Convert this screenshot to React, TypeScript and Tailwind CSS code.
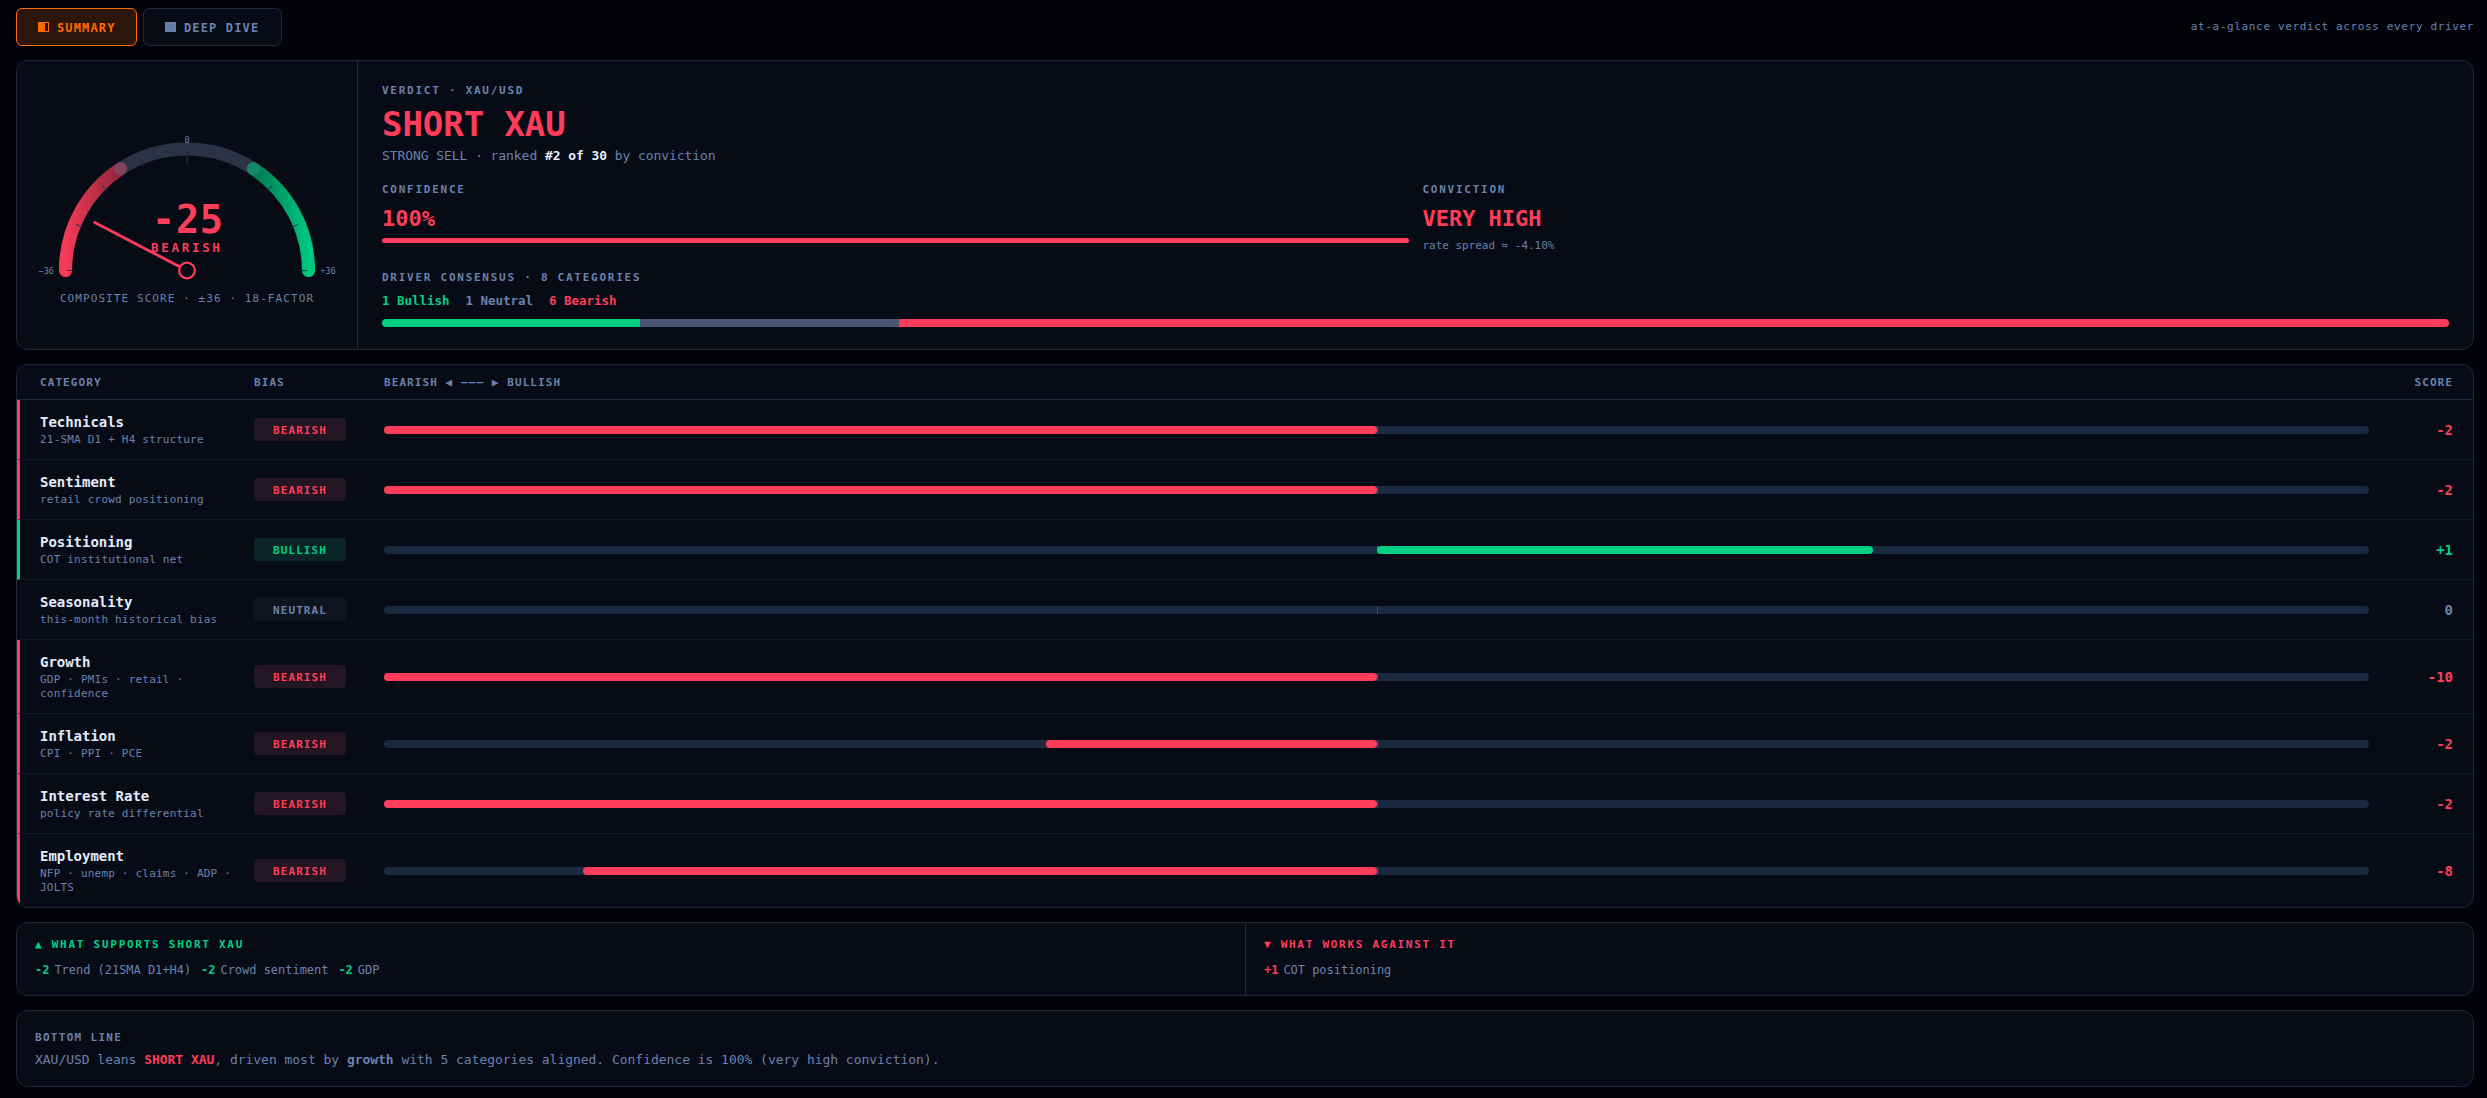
import { clsx } from 'clsx';

type Bias = 'BEARISH' | 'BULLISH' | 'NEUTRAL';

interface Driver {
  name: string;
  detail: string;
  bias: Bias;
  score: string;
  // share of the half track that is filled, 0 to 100
  fill: number;
}

interface Factor {
  value: string;
  label: string;
}

const DRIVERS: Driver[] = [
  { name: 'Technicals', detail: '21-SMA D1 + H4 structure', bias: 'BEARISH', score: '-2', fill: 100 },
  { name: 'Sentiment', detail: 'retail crowd positioning', bias: 'BEARISH', score: '-2', fill: 100 },
  { name: 'Positioning', detail: 'COT institutional net', bias: 'BULLISH', score: '+1', fill: 50 },
  { name: 'Seasonality', detail: 'this-month historical bias', bias: 'NEUTRAL', score: '0', fill: 0 },
  { name: 'Growth', detail: 'GDP · PMIs · retail · confidence', bias: 'BEARISH', score: '-10', fill: 100 },
  { name: 'Inflation', detail: 'CPI · PPI · PCE', bias: 'BEARISH', score: '-2', fill: 33.33 },
  { name: 'Interest Rate', detail: 'policy rate differential', bias: 'BEARISH', score: '-2', fill: 100 },
  { name: 'Employment', detail: 'NFP · unemp · claims · ADP · JOLTS', bias: 'BEARISH', score: '-8', fill: 80 },
];

const SUPPORTS: Factor[] = [
  { value: '-2', label: 'Trend (21SMA D1+H4)' },
  { value: '-2', label: 'Crowd sentiment' },
  { value: '-2', label: 'GDP' },
];

const AGAINST: Factor[] = [{ value: '+1', label: 'COT positioning' }];

// Gauge geometry
const CX = 150;
const CY = 140.5;
const R = 121.5;
const MAX_SCORE = 36;

function polar(radius: number, deg: number) {
  const rad = (deg * Math.PI) / 180;
  return { x: CX + radius * Math.cos(rad), y: CY - radius * Math.sin(rad) };
}

function arc(from: number, to: number) {
  const a = polar(R, from);
  const b = polar(R, to);
  return `M ${a.x} ${a.y} A ${R} ${R} 0 0 1 ${b.x} ${b.y}`;
}

function Gauge({ score }: { score: number }) {
  const tip = polar(104, 90 - (score / MAX_SCORE) * 90);
  const ticks = [0, 22.5, 45, 67.5, 90, 112.5, 135, 157.5, 180];

  return (
    <svg width="300" height="156" viewBox="0 0 300 156" className="overflow-visible">
      <defs>
        <linearGradient id="bear" x1="0" y1="0" x2="1" y2="0">
          <stop offset="0" stopColor="#ff3d5a" stopOpacity="0.95" />
          <stop offset="1" stopColor="#ff3d5a" stopOpacity="0.55" />
        </linearGradient>
        <linearGradient id="bull" x1="0" y1="0" x2="1" y2="0">
          <stop offset="0" stopColor="#00d084" stopOpacity="0.55" />
          <stop offset="1" stopColor="#00d084" stopOpacity="0.95" />
        </linearGradient>
      </defs>
      <g fill="none" strokeWidth="13.2" strokeLinecap="round">
        <path d={arc(180, 123.1)} stroke="url(#bear)" />
        <path d={arc(123.1, 56.9)} stroke="#64748b" strokeOpacity="0.4" />
        <path d={arc(56.9, 0)} stroke="url(#bull)" />
      </g>
      {ticks.map((deg) => {
        const a = polar(120, deg);
        const b = polar(deg === 90 ? 106.5 : 112, deg);
        return (
          <line
            key={deg}
            x1={a.x}
            y1={a.y}
            x2={b.x}
            y2={b.y}
            stroke="#1a2840"
            strokeWidth={deg === 90 ? 1.7 : 1.1}
            strokeOpacity={deg === 90 ? 1 : 0.8}
          />
        );
      })}
      <g fill="#6b82ad" fontSize="8.7">
        <text x="16.8" y="144" textAnchor="end">−36</text>
        <text x="150" y="13" textAnchor="middle">0</text>
        <text x="283" y="144">+36</text>
      </g>
      <line x1={CX} y1={CY} x2={tip.x} y2={tip.y} stroke="#ff3d5a" strokeWidth="2.8" strokeLinecap="round" />
      <circle cx={CX} cy={CY} r="7.9" fill="#060b16" stroke="#ff3d5a" strokeWidth="2.2" />
      <g fill="#ff3d5a" fontWeight="700">
        <text x="115" y="103" fontSize="38.5" letterSpacing="0.7">{score}</text>
        <text x="114" y="122.3" fontSize="12.5" letterSpacing="2.7">BEARISH</text>
      </g>
    </svg>
  );
}

function Label({ children }: { children: React.ReactNode }) {
  return <div className="text-[11px] leading-[14px] font-semibold tracking-[1.74px] text-[#6b82ad]">{children}</div>;
}

function DriverRow({ driver, last }: { driver: Driver; last: boolean }) {
  const { name, detail, bias, score, fill } = driver;
  const bearish = bias === 'BEARISH';
  const bullish = bias === 'BULLISH';

  return (
    <div
      className={clsx(
        'grid grid-cols-[200px_116px_1fr_70px] items-center gap-[14px] border-l-[3px] px-5 pt-[13px] pb-3',
        !last && 'border-b border-b-white/5',
        bearish && 'border-l-[#ff3d5a]',
        bullish && 'border-l-[#00d084]',
        !bearish && !bullish && 'border-l-transparent',
      )}
    >
      <div>
        <div className="text-[14px] leading-[18px] font-bold text-[#e2ecfa]">{name}</div>
        <div className="mt-0.5 text-[11px] leading-[14px] tracking-[0.2px] text-[#6b82ad]">{detail}</div>
      </div>
      <div
        className={clsx(
          '-mt-px h-[23px] w-[92px] rounded text-center text-[11px] leading-[25px] font-bold tracking-[1.08px]',
          bearish && 'bg-[#231521] text-[#ff3d5a]',
          bullish && 'bg-[#0a2527] text-[#00d084]',
          !bearish && !bullish && 'bg-[#0f151f] text-[#6b82ad]',
        )}
      >
        {bias}
      </div>
      <div className="relative h-2 rounded bg-[#1a2840]">
        <div className="absolute left-1/2 h-full w-px bg-[#3f4f6b]" />
        {fill > 0 && (
          <div
            className={clsx('absolute h-full rounded', bearish ? 'right-1/2 bg-[#ff3d5a]' : 'left-1/2 bg-[#00d084]')}
            style={{ width: `${fill / 2}%` }}
          />
        )}
      </div>
      <div
        className={clsx(
          'pt-px text-right text-[14px] leading-[19px] font-bold',
          bearish && 'text-[#ff3d5a]',
          bullish && 'text-[#00d084]',
          !bearish && !bullish && 'text-[#6b82ad]',
        )}
      >
        {score}
      </div>
    </div>
  );
}

function FactorList({ items, valueClass }: { items: Factor[]; valueClass: string }) {
  return (
    <div className="mt-2.5 flex gap-2.5 text-[12px] leading-4 text-[#6b82ad]">
      {items.map((item) => (
        <span key={item.label} className="flex gap-[5px]">
          <b className={valueClass}>{item.value}</b>
          {item.label}
        </span>
      ))}
    </div>
  );
}

export default function App() {
  return (
    <div className="h-[1098px] overflow-hidden bg-[#02040a] pt-2 pr-[13px] pl-4 font-['DejaVu_Sans_Mono',monospace] tracking-[-0.03px]">
      {/* Tabs */}
      <div className="flex items-center justify-between">
        <div className="flex gap-1.5 text-[12px] font-bold tracking-[1.14px]">
          <button className="flex h-[38px] w-[121px] items-center gap-2 rounded-md border border-[#ff6a00] bg-[#2b160c] pl-[21px] text-[#ff6a00]">
            <svg width="11" height="10" viewBox="0 0 11 10" shapeRendering="crispEdges">
              <rect width="11" height="10" fill="#ff6a00" />
              <rect x="7" y="1" width="3" height="8" fill="#2b160c" />
            </svg>
            <span className="pt-px">SUMMARY</span>
          </button>
          <button className="flex h-[38px] w-[139px] items-center gap-2 rounded-md border border-[#1a2840] bg-[#060b16] pl-[21px] text-[#6b82ad]">
            <svg width="11" height="10" viewBox="0 0 11 10" shapeRendering="crispEdges">
              <rect width="11" height="10" fill="#6b82ad" />
              <path d="M2.5 1v8M4.5 1v8M6.5 1v8M8.5 1v8M1 2.5h9M1 4.5h9M1 6.5h9" stroke="#5a6e96" strokeWidth="1" strokeOpacity="0.5" />
            </svg>
            <span className="pt-px">DEEP DIVE</span>
          </button>
        </div>
        <span className="pt-px text-[11px] tracking-[0.64px] text-[#6b82ad]">at-a-glance verdict across every driver</span>
      </div>

      {/* Verdict */}
      <div className="mt-[14px] flex h-[290px] overflow-hidden rounded-xl border border-[#1a2840] bg-[#060b16]">
        <div className="flex w-[341px] flex-col items-center border-r border-[#1a2840] pt-[69px]">
          <Gauge score={-25} />
          <div className="mt-1.5 text-[11px] leading-[14px] tracking-[1.08px] text-[#6b82ad]">
            COMPOSITE SCORE · ±36 · 18-FACTOR
          </div>
        </div>
        <div className="flex-1 px-6 pt-[23px]">
          <Label>VERDICT · XAU/USD</Label>
          <div className="mt-1.5 text-[34px] leading-[40px] font-bold tracking-[-0.06px] text-[#ff3d5a]">SHORT XAU</div>
          <div className="mt-1 text-[13px] leading-4 tracking-[-0.07px] text-[#6b82ad]">
            STRONG SELL · ranked <b className="text-[#e2ecfa]">#2 of 30</b> by conviction
          </div>
          <div className="mt-[19px] grid grid-cols-2 gap-[14px]">
            <div>
              <Label>CONFIDENCE</Label>
              <div className="mt-2 text-[22px] leading-[28px] font-bold text-[#ff3d5a]">100%</div>
              <div className="mt-[5px] h-[5px] rounded-full bg-[#ff3d5a]" />
            </div>
            <div>
              <Label>CONVICTION</Label>
              <div className="mt-2 text-[22px] leading-[28px] font-bold text-[#ff3d5a]">VERY HIGH</div>
              <div className="mt-1.5 text-[11px] leading-[14px] text-[#6b82ad]">rate spread ≈ -4.10%</div>
            </div>
          </div>
          <div className="mt-[18px]">
            <Label>DRIVER CONSENSUS · 8 CATEGORIES</Label>
          </div>
          <div className="mt-[7px] flex gap-4 text-[12.5px] leading-[18px] font-bold">
            <span className="text-[#00d084]">1 Bullish</span>
            <span className="text-[#6b82ad]">1 Neutral</span>
            <span className="text-[#ff3d5a]">6 Bearish</span>
          </div>
          <div className="mt-[9px] flex h-2 overflow-hidden rounded">
            <div className="w-1/8 bg-[#00d084]" />
            <div className="w-1/8 bg-[#475672]" />
            <div className="flex-1 bg-[#ff3d5a]" />
          </div>
        </div>
      </div>

      {/* Driver table */}
      <div className="mt-[14px] overflow-hidden rounded-xl border border-[#1a2840] bg-[#060b16]">
        <div className="grid h-[35px] grid-cols-[200px_116px_1fr_70px] items-center gap-[14px] border-b border-[#1a2840] pt-0.5 pr-5 pl-[23px] text-[11px] font-semibold tracking-[1.08px] text-[#6b82ad]">
          <span>CATEGORY</span>
          <span>BIAS</span>
          <span>BEARISH ◀ ——— ▶ BULLISH</span>
          <span className="text-right">SCORE</span>
        </div>
        {DRIVERS.map((driver, i) => (
          <DriverRow key={driver.name} driver={driver} last={i === DRIVERS.length - 1} />
        ))}
      </div>

      {/* Pros and cons */}
      <div className="mt-[14px] grid h-[74px] grid-cols-2 overflow-hidden rounded-xl border border-[#1a2840] bg-[#060b16]">
        <div className="px-[18px] pt-[15px]">
          <div className="text-[11px] leading-[14px] font-bold tracking-[1.74px] text-[#00d084]">▲ WHAT SUPPORTS SHORT XAU</div>
          <FactorList items={SUPPORTS} valueClass="text-[#00d084]" />
        </div>
        <div className="border-l border-[#1a2840] px-[18px] pt-[15px]">
          <div className="text-[11px] leading-[14px] font-bold tracking-[1.72px] text-[#ff3d5a]">▼ WHAT WORKS AGAINST IT</div>
          <FactorList items={AGAINST} valueClass="text-[#ff3d5a]" />
        </div>
      </div>

      {/* Bottom line */}
      <div className="mt-[14px] h-[77px] rounded-xl border border-[#1a2840] bg-[#060b16] px-[18px] pt-5">
        <div className="text-[11px] leading-[14px] font-semibold tracking-[1.3px] text-[#6b82ad]">BOTTOM LINE</div>
        <p className="mt-1 text-[13px] leading-[21px] text-[#6b82ad]">
          XAU/USD leans <b className="text-[#ff3d5a]">SHORT XAU</b>, driven most by <b>growth</b> with 5 categories
          aligned. Confidence is 100% (very high conviction).
        </p>
      </div>
    </div>
  );
}
